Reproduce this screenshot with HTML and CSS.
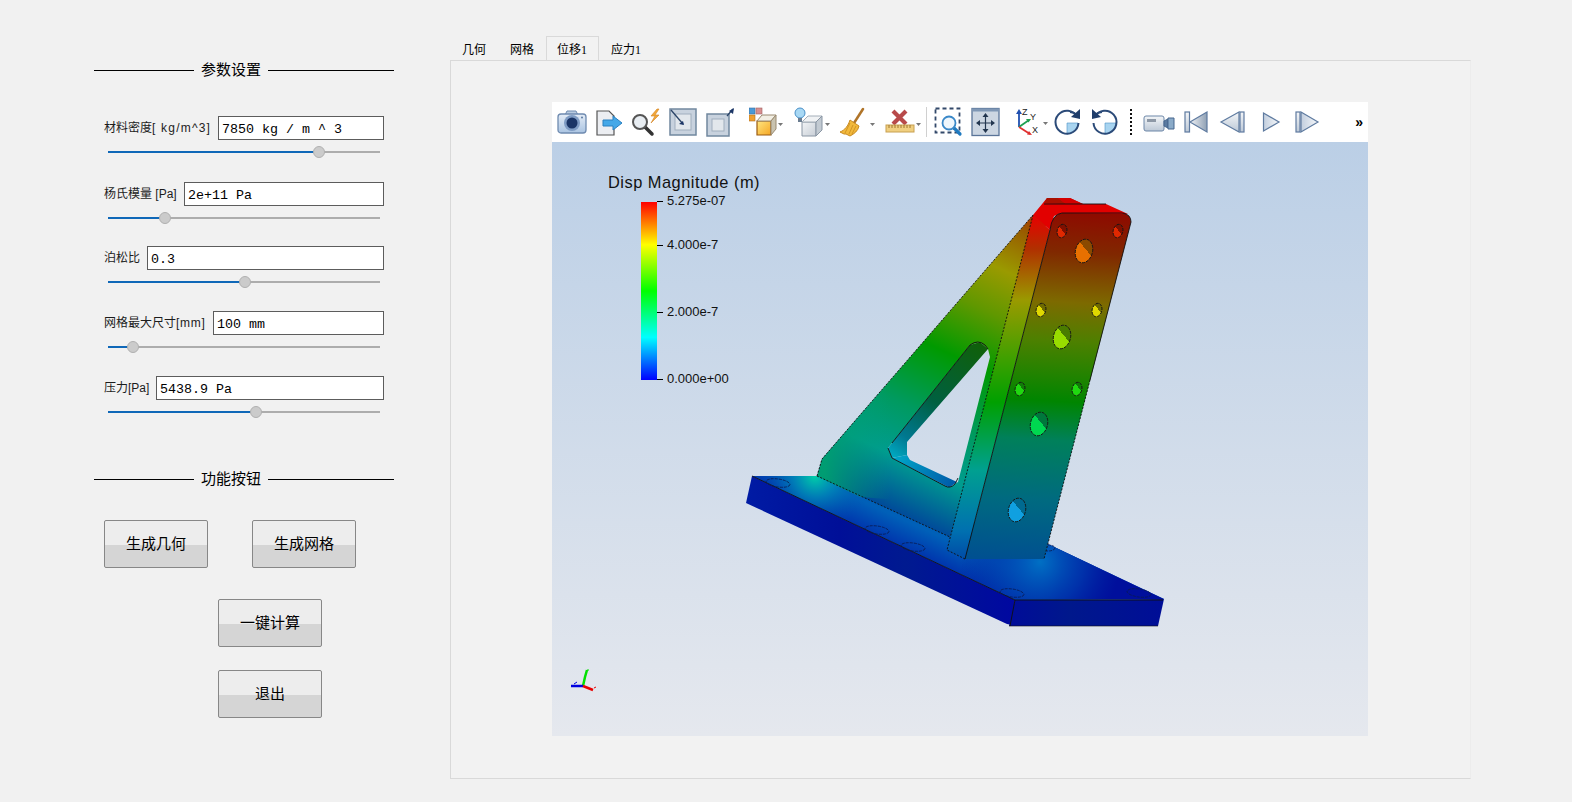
FILE: index.html
```html
<!DOCTYPE html>
<html lang="zh">
<head>
<meta charset="utf-8">
<title>参数设置</title>
<link rel="stylesheet" href="styles.css">
</head>
<body>
<aside class="panel">
  <div class="heading"><i class="rule first"></i><span>参数设置</span><i class="rule"></i></div>
  <div class="params">
    <div class="param">
      <div class="field"><label class="lab l1">材料密度<span class="wide">[ kg/m^3]</span></label><input class="inp" value="7850 kg / m ^ 3"></div>
      <div class="slider"><div class="fill" style="width:77%"></div><div class="thumb" style="left:77.5%"></div></div>
    </div>
    <div class="param">
      <div class="field"><label class="lab l2">杨氏模量 [Pa]</label><input class="inp" value="2e+11 Pa"></div>
      <div class="slider"><div class="fill" style="width:20%"></div><div class="thumb" style="left:20.9%"></div></div>
    </div>
    <div class="param">
      <div class="field"><label class="lab l3">泊松比</label><input class="inp" value="0.3"></div>
      <div class="slider"><div class="fill" style="width:49%"></div><div class="thumb" style="left:50.3%"></div></div>
    </div>
    <div class="param">
      <div class="field"><label class="lab l4">网格最大尺寸<span class="mid">[mm]</span></label><input class="inp" value="100 mm"></div>
      <div class="slider"><div class="fill" style="width:8%"></div><div class="thumb" style="left:9.2%"></div></div>
    </div>
    <div class="param">
      <div class="field"><label class="lab l5">压力[Pa]</label><input class="inp" value="5438.9 Pa"></div>
      <div class="slider"><div class="fill" style="width:53%"></div><div class="thumb" style="left:54.3%"></div></div>
    </div>
  </div>
  <div class="heading h2"><i class="rule first"></i><span>功能按钮</span><i class="rule"></i></div>
  <div class="actions">
    <div class="btnrow"><button class="btn">生成几何</button><button class="btn">生成网格</button></div>
    <div class="btnrow centre"><button class="btn">一键计算</button></div>
    <div class="btnrow centre last"><button class="btn">退出</button></div>
  </div>
</aside>

<main class="tabwidget">
  <div class="tabs">
    <div class="tab">几何</div>
    <div class="tab">网格</div>
    <div class="tab active">位移1</div>
    <div class="tab">应力1</div>
  </div>
  <div class="pane">
    <div class="viewer">
      <div class="toolbar">
        <svg class="ic" viewBox="0 0 32 32"><path d="M9 9l2-4h9l2 4z" fill="#b9cbe0" stroke="#6f8bb0"/><rect x="2" y="8" width="28" height="19" rx="3" fill="url(#gCam)" stroke="#6f8bb0" stroke-width="1.3"/><circle cx="16" cy="17" r="8" fill="#7f9cc4"/><circle cx="16" cy="17" r="5.5" fill="#1b3566"/><circle cx="26" cy="11.500" r="1" fill="#5a78a0"/></svg>
        <svg class="ic m6" viewBox="0 0 32 32"><path d="M3 5h12l5 5v19H3z" fill="#eceef2" stroke="#555" stroke-width="1.2"/><path d="M9 14h10v-4l9 7-9 7v-4H9z" fill="#45a8e8" stroke="#2a80c0"/></svg>
        <svg class="ic m4" viewBox="0 0 32 32"><path d="M15 21l7 7" stroke="#333" stroke-width="3.500" stroke-linecap="round"/><circle cx="10" cy="16" r="7" fill="#e8edf2" stroke="#555" stroke-width="2"/><path d="M27 3l-6 7h4l-4 7 8-8h-4l4-6z" fill="#f2a93a" stroke="#d08020" stroke-width=".6"/></svg>
        <svg class="ic m4" viewBox="0 0 32 32"><rect x="4" y="3" width="26" height="26" fill="#c8d2de" stroke="#71889f" stroke-width="1.5"/><rect x="9" y="8" width="16" height="16" fill="#e2e7ec" stroke="#a0aebd"/><path d="M5 4l12 14" stroke="#2b4468" stroke-width="1.3"/><path d="M18 19l-5-1 4-3z" fill="#1b3566"/></svg>
        <svg class="ic m6" viewBox="0 0 32 32"><rect x="3" y="8" width="22" height="22" fill="#c8d2de" stroke="#71889f" stroke-width="1.5"/><rect x="8" y="13" width="12" height="12" fill="#e2e7ec" stroke="#a0aebd"/><path d="M23 10l6-7" stroke="#2b4468" stroke-width="1.3"/><path d="M30 2l-1 6-4-3z" fill="#1b3566"/></svg>
        <svg class="ic w40 m13" viewBox="0 0 40 32"><rect x="0" y="2" width="6" height="6" fill="#4a9ad8" stroke="#3a6ea0" stroke-width=".6"/><rect x="7" y="2" width="6" height="6" fill="#d89090" stroke="#a06060" stroke-width=".6"/><rect x="0" y="9" width="6" height="6" fill="#f0a030" stroke="#b07020" stroke-width=".6"/><path d="M8 15h14v14H8z" fill="url(#gOr)" stroke="#9a5a10" stroke-width="1.2"/><path d="M8 15l5-6h14l-5 6z" fill="#f2efe4" stroke="#9a8a70"/><path d="M22 15l5-6v14l-5 6z" fill="#c9c3b0" stroke="#9a8a70"/><path d="M29 17h5l-2.500 3z" fill="#777"/></svg>
        <svg class="ic w40 m2" viewBox="0 0 40 32"><circle cx="9" cy="7" r="5" fill="#a8d8f4" stroke="#4a90c8"/><rect x="7" y="12" width="4" height="4" fill="#6a7c90"/><path d="M11 16h14v14H11z" fill="url(#gGy)" stroke="#8a96a4"/><path d="M11 16l6-6h14l-6 6z" fill="#f0f2f4" stroke="#a4aeb8"/><path d="M25 16l6-6v14l-6 6z" fill="#c2cad2" stroke="#8a96a4"/><path d="M34 17h5l-2.500 3z" fill="#777"/></svg>
        <svg class="ic w40 m6" viewBox="0 0 40 32"><path d="M26 3l-9 14" stroke="#b07428" stroke-width="2.500" stroke-linecap="round"/><path d="M13 14l9 6c-1 5-5 8-9 10l-4-2-2 0-4-2c5-2 8-6 10-12z" fill="#f2b93c" stroke="#c88a20"/><path d="M13 17l-5 10M16 19l-4 9M19 20l-4 8" stroke="#c88a20" stroke-width=".8"/><path d="M33 17h5l-2.500 3z" fill="#777"/></svg>
        <svg class="ic w40 m7" viewBox="0 0 40 32"><path d="M9 5l13 13M22 5L9 18" stroke="#b84a4a" stroke-width="4.200"/><rect x="2" y="19" width="28" height="7" fill="#f0cf80" stroke="#c8a050"/><path d="M5 19v3M8 19v3M11 19v3M14 19v3M17 19v3M20 19v3M23 19v3M26 19v3" stroke="#a07830"/><path d="M32 17h5l-2.500 3z" fill="#777"/></svg>
        <i class="sep"></i>
        <svg class="ic m4" viewBox="0 0 32 32"><rect x="4.500" y="2.500" width="24" height="24" fill="none" stroke="#33496a" stroke-width="1.800" stroke-dasharray="4 3"/><path d="M23 22l6 6" stroke="#1f7ac0" stroke-width="3.200" stroke-linecap="round"/><circle cx="18" cy="17" r="6.500" fill="#eef6fc" stroke="#3a88c8" stroke-width="1.800"/></svg>
        <svg class="ic m6" viewBox="0 0 32 32"><rect x="3" y="2.500" width="27" height="27" fill="#ccd6e2" stroke="#5a7498" stroke-width="1.300"/><rect x="3" y="2.500" width="27" height="3" fill="#7f97b5"/><path d="M16.500 9v16M9 17h15" stroke="#23364f" stroke-width="1.200"/><path d="M16.500 7l3 4h-6zM16.500 27l3-4h-6zM7 17l4-3v6zM26 17l-4-3v6z" fill="#23364f"/></svg>
        <svg class="ic w38 m12" viewBox="0 0 38 32"><path d="M6 21V6" stroke="#2050b0" stroke-width="1.800"/><path d="M6 3l-3 5h6z" fill="#2050b0"/><path d="M6 21l10-7" stroke="#20a050" stroke-width="1.800"/><path d="M18 13l-5 0 2.500 3.500z" fill="#20a050"/><path d="M6 21l11 7" stroke="#e03030" stroke-width="1.800"/><path d="M19 29l-5-.5 2-3.500z" fill="#e03030"/><text class="axtxt" x="9" y="9">Z</text><text class="axtxt" x="17" y="14">Y</text><text class="axtxt" x="19" y="27">X</text><path d="M30 16h5l-2.500 3z" fill="#777"/></svg>
        <svg class="ic m1" viewBox="0 0 32 32"><path d="M15 17h11a11 11 0 0 1-11 11z" fill="#a8d4f0" stroke="#4a90c8" stroke-width=".6"/><path d="M25 10.500A11.500 11.500 0 1 0 26.500 17" fill="none" stroke="#2b4a78" stroke-width="2"/><path d="M18 6a11 11 0 0 1 7 3" fill="none" stroke="#2b4a78" stroke-width="2"/><path d="M28 3l0 10-9-2z" fill="#1f3d6a"/></svg>
        <svg class="ic m4" viewBox="0 0 32 32"><path d="M17 17h11a11 11 0 0 1-11 11z" fill="#a8d4f0" stroke="#4a90c8" stroke-width=".6"/><path d="M7 10.500A11.500 11.500 0 1 1 5.500 17" fill="none" stroke="#2b4a78" stroke-width="2"/><path d="M14 6a11 11 0 0 0-7 3" fill="none" stroke="#2b4a78" stroke-width="2"/><path d="M4 3l0 10 9-2z" fill="#1f3d6a"/></svg>
        <i class="dots"></i>
        <svg class="ic m11" viewBox="0 0 32 32"><rect x="1" y="10" width="20" height="15" rx="2" fill="url(#gMed)" stroke="#6d87a8"/><rect x="4" y="13" width="9" height="3" fill="#8d98a6"/><path d="M21 15l4-2v9l-4-2z" fill="#5a7aa0" stroke="#46678e"/><path d="M25 12h6v11h-6z" fill="#8aaac8" stroke="#46678e"/></svg>
        <svg class="ic m5" viewBox="0 0 32 32"><rect x="5" y="6" width="4.500" height="20" fill="url(#gMed)" stroke="#5f7ba0" stroke-width="1.200"/><path d="M27 6L10 16l17 10z" fill="url(#gMed2)" stroke="#5f7ba0" stroke-width="1.200"/></svg>
        <svg class="ic m5" viewBox="0 0 32 32"><path d="M22 6L4 16l18 10z" fill="url(#gMed)" stroke="#5f7ba0" stroke-width="1.200"/><rect x="23" y="6" width="4" height="20" fill="url(#gMed)" stroke="#5f7ba0" stroke-width="1.200"/></svg>
        <svg class="ic m6" viewBox="0 0 32 32"><path d="M8.500 7l15.500 9-15.500 9z" fill="url(#gMed3)" stroke="#5f7ba0" stroke-width="1.200"/></svg>
        <svg class="ic m4" viewBox="0 0 32 32"><rect x="5" y="6" width="4" height="20" fill="url(#gMed)" stroke="#5f7ba0" stroke-width="1.200"/><path d="M10 6l17 10-17 10z" fill="url(#gMed3)" stroke="#5f7ba0" stroke-width="1.200"/></svg>
        <span class="more">»</span>
      </div>
      <svg class="scene" viewBox="552 142 816 594" width="816" height="594">
        <defs>
          <linearGradient id="gBg" x1="0" y1="0" x2="0" y2="1"><stop offset="0" stop-color="#bbcfe6"/><stop offset="1" stop-color="#e5e8ee"/></linearGradient>
          <linearGradient id="gBar" x1="0" y1="0" x2="0" y2="1"><stop offset="0" stop-color="#ff0000"/><stop offset=".24" stop-color="#ffff00"/><stop offset=".5" stop-color="#00ff00"/><stop offset=".76" stop-color="#00ffff"/><stop offset="1" stop-color="#0000ff"/></linearGradient>
          <linearGradient id="gCam" x1="0" y1="0" x2="0" y2="1"><stop offset="0" stop-color="#e4ecf6"/><stop offset="1" stop-color="#aac4e2"/></linearGradient>
          <linearGradient id="gOr" x1="0" y1="0" x2="1" y2="1"><stop offset="0" stop-color="#ffe680"/><stop offset="1" stop-color="#f5a623"/></linearGradient>
          <linearGradient id="gGy" x1="0" y1="0" x2="1" y2="1"><stop offset="0" stop-color="#f2f4f6"/><stop offset="1" stop-color="#c8ced6"/></linearGradient>
          <linearGradient id="gMed" x1="0" y1="0" x2="0" y2="1"><stop offset="0" stop-color="#f4f6f8"/><stop offset="1" stop-color="#bcc8d6"/></linearGradient>
          <linearGradient id="gMed2" x1="0" y1="0" x2="1" y2="0"><stop offset="0" stop-color="#f0f2f5"/><stop offset="1" stop-color="#8fa0b4"/></linearGradient>
          <linearGradient id="gMed3" x1="0" y1="0" x2="1" y2="0"><stop offset="0" stop-color="#c2cede"/><stop offset="1" stop-color="#f6f8fa"/></linearGradient>

          <linearGradient id="gGus" gradientUnits="userSpaceOnUse" x1="1021" y1="196" x2="880" y2="505"><stop offset="0" stop-color="#b02000"/><stop offset=".1" stop-color="#986000"/><stop offset=".22" stop-color="#9a9a00"/><stop offset=".35" stop-color="#609800"/><stop offset=".51" stop-color="#009a00"/><stop offset=".7" stop-color="#009a60"/><stop offset=".85" stop-color="#009c90"/><stop offset="1" stop-color="#004a9a"/></linearGradient>
          <linearGradient id="gGusL" gradientUnits="userSpaceOnUse" x1="825" y1="0" x2="890" y2="0"><stop offset="0" stop-color="#00a070" stop-opacity=".95"/><stop offset="1" stop-color="#00a070" stop-opacity="0"/></linearGradient>
          <linearGradient id="gFil" gradientUnits="userSpaceOnUse" x1="0" y1="215" x2="0" y2="555"><stop offset="0" stop-color="#e80000"/><stop offset=".1" stop-color="#b03000"/><stop offset=".25" stop-color="#9a9a00"/><stop offset=".42" stop-color="#40a000"/><stop offset=".55" stop-color="#00a000"/><stop offset=".75" stop-color="#00a090"/><stop offset=".93" stop-color="#0070b0"/><stop offset="1" stop-color="#0050a8"/></linearGradient>
          <linearGradient id="gPlate" gradientUnits="userSpaceOnUse" x1="1050" y1="205" x2="1030" y2="560"><stop offset="0" stop-color="#900600"/><stop offset=".13" stop-color="#802800"/><stop offset=".27" stop-color="#7d6a00"/><stop offset=".38" stop-color="#4d8000"/><stop offset=".55" stop-color="#008500"/><stop offset=".66" stop-color="#00805a"/><stop offset=".83" stop-color="#006a80"/><stop offset="1" stop-color="#005090"/></linearGradient>
          <linearGradient id="gWall" gradientUnits="userSpaceOnUse" x1="985" y1="345" x2="900" y2="470"><stop offset="0" stop-color="#106008"/><stop offset=".5" stop-color="#006040"/><stop offset=".8" stop-color="#007890"/><stop offset="1" stop-color="#00b8d0"/></linearGradient>
          <linearGradient id="gWallB" gradientUnits="userSpaceOnUse" x1="895" y1="455" x2="955" y2="485"><stop offset="0" stop-color="#00a8c8"/><stop offset="1" stop-color="#0058a8"/></linearGradient>
          <linearGradient id="gFace" gradientUnits="userSpaceOnUse" x1="746" y1="0" x2="1012" y2="0"><stop offset="0" stop-color="#001ba4"/><stop offset=".35" stop-color="#000f98"/><stop offset=".6" stop-color="#001a90"/><stop offset="1" stop-color="#0008a0"/></linearGradient>
          <linearGradient id="gFace2" gradientUnits="userSpaceOnUse" x1="1010" y1="0" x2="1160" y2="0"><stop offset="0" stop-color="#000c98"/><stop offset=".4" stop-color="#00188c"/><stop offset="1" stop-color="#000e96"/></linearGradient>
          <linearGradient id="gTop" gradientUnits="userSpaceOnUse" x1="866" y1="503" x2="840" y2="560"><stop offset="0" stop-color="#0060b8"/><stop offset=".6" stop-color="#0020a8"/><stop offset="1" stop-color="#000f9c"/></linearGradient>
          <linearGradient id="gTopR" gradientUnits="userSpaceOnUse" x1="960" y1="0" x2="1060" y2="0"><stop offset="0" stop-color="#000f9c" stop-opacity="0"/><stop offset="1" stop-color="#000f9c"/></linearGradient>
          <radialGradient id="gTopA" gradientUnits="userSpaceOnUse" cx="815" cy="476" r="55"><stop offset="0" stop-color="#00d0a8"/><stop offset=".4" stop-color="#0090b8" stop-opacity=".7"/><stop offset="1" stop-color="#0050b0" stop-opacity="0"/></radialGradient>
          <radialGradient id="gTopB" gradientUnits="userSpaceOnUse" cx="1040" cy="562" r="80"><stop offset="0" stop-color="#0070c4"/><stop offset=".55" stop-color="#0048b4" stop-opacity=".6"/><stop offset="1" stop-color="#0030a8" stop-opacity="0"/></radialGradient>

          <linearGradient id="hRed" x1=".75" y1="0" x2=".25" y2="1"><stop offset=".45" stop-color="#801000"/><stop offset=".45" stop-color="#e02800"/></linearGradient>
          <linearGradient id="hOr" x1=".75" y1="0" x2=".25" y2="1"><stop offset=".4" stop-color="#8a4a00"/><stop offset=".4" stop-color="#e87000"/></linearGradient>
          <linearGradient id="hYe" x1=".75" y1="0" x2=".25" y2="1"><stop offset=".4" stop-color="#6e6a00"/><stop offset=".4" stop-color="#e0d800"/></linearGradient>
          <linearGradient id="hLi" x1=".75" y1="0" x2=".25" y2="1"><stop offset=".4" stop-color="#4a7c00"/><stop offset=".4" stop-color="#98dc00"/></linearGradient>
          <linearGradient id="hGr" x1=".75" y1="0" x2=".25" y2="1"><stop offset=".35" stop-color="#107c08"/><stop offset=".35" stop-color="#20d810"/></linearGradient>
          <linearGradient id="hLg" x1=".75" y1="0" x2=".25" y2="1"><stop offset=".4" stop-color="#00783c"/><stop offset=".4" stop-color="#00d850"/></linearGradient>
          <linearGradient id="hCy" x1=".75" y1="0" x2=".25" y2="1"><stop offset=".4" stop-color="#006a90"/><stop offset=".4" stop-color="#10a0e0"/></linearGradient>
        </defs>

        <rect x="552" y="142" width="816" height="594" fill="url(#gBg)"/>

        <text class="cb-title" x="608" y="188">Disp Magnitude (m)</text>
        <rect x="641" y="202" width="16" height="178" fill="url(#gBar)"/>
        <path class="tick" d="M657 201.500h6M657 245.500h6M657 312.500h6M657 379.500h6"/>
        <text class="cb-lab" x="667" y="204.500">5.275e-07</text>
        <text class="cb-lab" x="667" y="248.500">4.000e-7</text>
        <text class="cb-lab" x="667" y="315.500">2.000e-7</text>
        <text class="cb-lab" x="667" y="382.500">0.000e+00</text>

        <!-- base plate -->
        <polygon points="752,476 746,503 1007,624 1012,625 1015,600" fill="url(#gFace)"/>
        <polygon points="1015,600 1164,599 1158,626 1009,626" fill="url(#gFace2)"/>
        <polygon points="752,476 820,476 1050,545 1164,599 1015,600" fill="url(#gTop)"/>
        <polygon points="752,476 820,476 1050,545 1164,599 1015,600" fill="url(#gTopR)"/>
        <polygon points="752,476 820,476 1050,545 1164,599 1015,600" fill="url(#gTopA)"/>
        <polygon points="752,476 820,476 1050,545 1164,599 1015,600" fill="url(#gTopB)"/>
        <path class="edge" d="M752 476l263 124h148M1015 600l-5 26"/>
        <path class="edge thin" d="M1009 626h149"/>
        <ellipse class="bolt" cx="778" cy="483" rx="12" ry="4" transform="rotate(8 778 483)"/>
        <ellipse class="bolt" cx="877" cy="530" rx="12" ry="4" transform="rotate(8 877 530)"/>
        <ellipse class="bolt" cx="913" cy="547" rx="12" ry="4" transform="rotate(8 913 547)"/>
        <ellipse class="bolt" cx="1012" cy="593" rx="12" ry="4" transform="rotate(8 1012 593)"/>
        <ellipse class="bolt" cx="1139" cy="593" rx="12" ry="4" transform="rotate(8 1139 593)"/>
        <ellipse class="bolt" cx="1048" cy="548" rx="7" ry="3"/>

        <!-- gusset with its opening -->
        <path id="gus" fill-rule="evenodd" fill="url(#gGus)" d="M817 476L822 459L1033 215L1047 222L950 537ZM892 443L970 345L980 342L988 349L990 357L958 482L950 487L948 487L892 458L888 448Z"/>
        <path fill-rule="evenodd" fill="url(#gGusL)" d="M817 476L822 459L900 368L900 500L860 497ZM892 443L970 345L980 342L988 349L990 357L958 482L950 487L948 487L892 458L888 448Z"/>
        <path fill="url(#gWall)" d="M892 443L970 345L980 342L988 349L907 442L907 455L892 458L888 448Z"/>
        <path fill="url(#gWallB)" d="M892 458L907 455L910 460L957 482L950 487L948 487Z"/>
        <path class="edge" d="M892 443L970 345Q978 339 985 345L988 349M888 448L892 458L945 486Q950 489 955 484L958 478"/>
        <path class="edge dash" d="M817 476L822 459L1033 215M817 476L950 537"/>

        <!-- upright -->
        <polygon points="1033,215 1050,230 965,559 947,550" fill="url(#gFil)"/>
        <path d="M1050 230Q1052 214 1062 213L1122 213Q1131 214 1131 222L1044 559L965 559Z" fill="url(#gPlate)"/>
        <polygon points="1033,215 1047,198 1070,198 1083,204 1106,204 1128,214 1062,213 1054,216 1050,230" fill="#e20000"/>
        <polygon points="1047,198 1058,198 1066,204 1044,203" fill="#a81000"/>
        <polygon points="1058,198 1070,198 1083,204 1066,204" fill="#d40000"/>
        <path class="edge" d="M1050 230Q1052 214 1062 213L1122 213Q1131 214 1131 222L1090 380M1050 230L965 559M1044 204H1106"/>
        <path class="edge dash" d="M1033 215L947 550L965 559M1090 380L1044 559"/>

        <ellipse class="hole" cx="1062" cy="231" rx="4.800" ry="6.800" transform="rotate(15 1062 231)" fill="url(#hRed)"/>
        <ellipse class="hole" cx="1118" cy="231" rx="4.800" ry="6.800" transform="rotate(15 1118 231)" fill="url(#hRed)"/>
        <ellipse class="hole" cx="1084" cy="251" rx="8.500" ry="12" transform="rotate(15 1084 251)" fill="url(#hOr)"/>
        <ellipse class="hole" cx="1041" cy="310" rx="4.800" ry="6.800" transform="rotate(15 1041 310)" fill="url(#hYe)"/>
        <ellipse class="hole" cx="1097" cy="310" rx="4.800" ry="6.800" transform="rotate(15 1097 310)" fill="url(#hYe)"/>
        <ellipse class="hole" cx="1062" cy="337" rx="8.500" ry="12" transform="rotate(15 1062 337)" fill="url(#hLi)"/>
        <ellipse class="hole" cx="1020" cy="389" rx="4.800" ry="6.800" transform="rotate(15 1020 389)" fill="url(#hGr)"/>
        <ellipse class="hole" cx="1077" cy="389" rx="4.800" ry="6.800" transform="rotate(15 1077 389)" fill="url(#hGr)"/>
        <ellipse class="hole" cx="1039" cy="424" rx="8.500" ry="12" transform="rotate(15 1039 424)" fill="url(#hLg)"/>
        <ellipse class="hole" cx="1017" cy="510" rx="8.500" ry="12" transform="rotate(15 1017 510)" fill="url(#hCy)"/>

        <!-- orientation axes -->
        <path class="ax" stroke="#00e000" d="M583 686L585 677L587 670"/>
        <path class="ax" stroke="#0000e0" d="M583 686H571"/>
        <path class="ax" stroke="#e80000" d="M583 686L593 690"/>
        <path class="axl" stroke="#00e000" d="M587 670h2"/>
        <path class="axl" stroke="#0000e0" d="M574 684l3-2"/>
        <path class="axl" stroke="#e80000" d="M594 688l2-1"/>
      </svg>
    </div>
  </div>
</main>
</body>
</html>
```

FILE: styles.css
```css
* { box-sizing: border-box; }
html, body { margin: 0; height: 100%; }
body {
  display: flex;
  width: 1572px;
  height: 802px;
  overflow: hidden;
  background: #f1f1f1;
  color: #000;
  font-family: "Liberation Sans", "Noto Sans CJK SC", sans-serif;
}

/* left panel */
.panel { width: 450px; flex: none; padding: 60px 56px 0 94px; }
.heading { display: flex; align-items: center; gap: 7px; height: 20px; font-size: 15px; }
.heading span { flex: none; width: 60px; padding-bottom: 4px; white-space: nowrap; }
.rule { flex: 1; height: 1px; background: #000; }
.rule.first { flex: none; width: 100px; }

.params { margin-top: 36px; height: 353px; padding: 0 10px; }
.param { height: 65px; }
.param:first-child { height: 66px; }
.param:nth-child(2) { height: 64px; }
.field { display: flex; align-items: center; height: 24px; }
.lab { flex: none; padding-bottom: 3px; font-size: 12px; color: #1c1c1c; white-space: nowrap; }
.wide { letter-spacing: 1.2px; }
.mid { letter-spacing: .7px; }
.l1 { width: 114px; }
.l2 { width: 80px; }
.l3 { width: 43px; }
.l4 { width: 109px; }
.l5 { width: 52px; }
.inp {
  flex: 1;
  min-width: 0;
  height: 24px;
  margin: 0;
  padding: 2px 3px 0;
  border: 1px solid #5c5c5c;
  border-radius: 0;
  background: #fff;
  color: #000;
  font-family: "Liberation Mono", monospace;
  font-size: 13.33px;
  outline: none;
}
.slider { position: relative; height: 2px; margin: 11px 4px 0; background: #adadad; }
.fill { height: 2px; background: #0f68b8; }
.thumb {
  position: absolute;
  top: -5px;
  width: 12px;
  height: 12px;
  margin-left: -6px;
  border: 1px solid #b0b0b0;
  border-radius: 50%;
  background: #cbcbcb;
}

.actions { margin-top: 31px; }
.btnrow { display: flex; gap: 44px; padding-left: 10px; margin-bottom: 31px; }
.btnrow.centre { padding-left: 124px; }
.btnrow.last { margin-top: -8px; }
.btn {
  width: 104px;
  height: 48px;
  padding: 0 0 4px;
  border: 1px solid #878787;
  border-radius: 2px;
  background: linear-gradient(#ededed 0, #ededed 52%, #d5d5d5 52%, #d5d5d5 100%);
  color: #000;
  font-family: "Noto Sans CJK SC", sans-serif;
  font-size: 15px;
}

/* tabs */
.tabwidget { flex: none; width: 1021px; padding-top: 36px; }
.tabs { display: flex; height: 24px; font-size: 12px; font-family: "Liberation Serif", "Noto Sans CJK SC", serif; }
.tab { display: flex; align-items: center; padding: 1px 12px 0; color: #000; }
.tab.active { padding: 1px 11px 0 10px; border: 1px solid #d9d9d9; border-bottom: 0; background: #f2f2f2; }
.pane {
  height: 719px;
  padding: 41px 0 0 101px;
  background: #f2f2f2;
  border-top: 1px solid #d9d9d9;
  border-left: 1px solid #d9d9d9;
  border-bottom: 1px solid #d9d9d9;
  border-right: 1px solid #ececec;
}
.viewer { width: 816px; }
.toolbar { display: flex; align-items: center; height: 40px; padding-left: 4px; background: #fff; }
.ic { flex: none; width: 32px; height: 32px; }
.w40 { width: 40px; }
.w38 { width: 38px; }
.m1 { margin-left: 1px; }
.m2 { margin-left: 2px; }
.m4 { margin-left: 4px; }
.m5 { margin-left: 5px; }
.m6 { margin-left: 6px; }
.m7 { margin-left: 7px; }
.m11 { margin-left: 11px; }
.m12 { margin-left: 12px; }
.m13 { margin-left: 13px; }
.sep { flex: none; width: 1px; height: 30px; margin-left: 2px; background: #d0d0d0; }
.dots { flex: none; width: 2px; height: 26px; margin-left: 10px; border-left: 2px dotted #111; }
.more { margin-left: auto; margin-right: 5px; font-size: 14px; font-weight: 700; line-height: 1; color: #000; }
.axtxt { font: 9px "Liberation Sans", sans-serif; fill: #222; }

/* render view */
.scene { display: block; }
.cb-title { font: 16.4px "Liberation Sans", sans-serif; letter-spacing: .5px; fill: #111; }
.cb-lab { font: 13px "Liberation Sans", sans-serif; fill: #111; }
.tick { stroke: #000; stroke-width: 1; fill: none; }
.edge { fill: none; stroke: #101010; stroke-width: .9; }
.edge.thin { stroke-width: .6; }
.edge.dash { stroke-dasharray: 2 1.500; }
.bolt { fill: none; stroke: #0a1a50; stroke-width: .8; stroke-dasharray: 3 1; }
.hole { stroke: #151515; stroke-width: .9; stroke-dasharray: 3 1; }
.ax { fill: none; stroke-width: 2.5; }
.axl { fill: none; stroke-width: 1; }
```
